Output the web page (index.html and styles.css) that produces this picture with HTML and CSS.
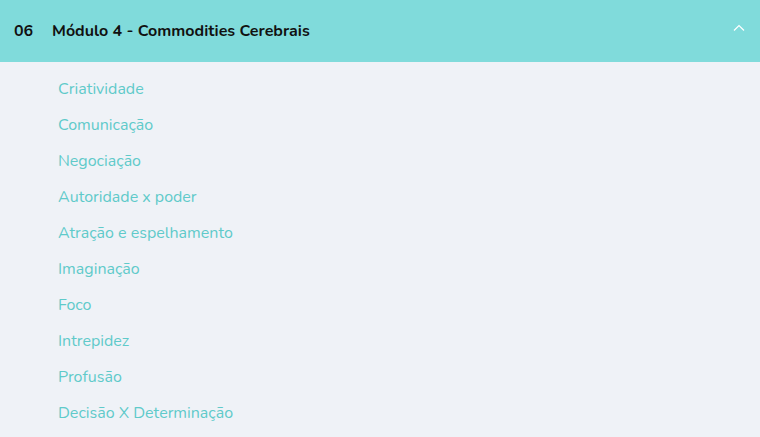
FILE: index.html
```html
<!DOCTYPE html>
<html>
<head>
<meta charset="utf-8">
<link rel="stylesheet" href="styles.css">
</head>
<body>
<div class="module">
  <div class="module-header">
    <span class="num">06</span>
    <span class="title">Módulo 4 - Commodities Cerebrais</span>
    <svg class="chevron" width="12" height="8" viewBox="0 0 12 8"><path d="M1 6.5 L6 1.5 L11 6.5" fill="none" stroke="#ffffff" stroke-width="1.2"/></svg>
  </div>
  <ul class="lessons">
    <li>Criatividade</li>
    <li>Comunicação</li>
    <li>Negociação</li>
    <li>Autoridade x poder</li>
    <li>Atração e espelhamento</li>
    <li>Imaginação</li>
    <li>Foco</li>
    <li>Intrepidez</li>
    <li>Profusão</li>
    <li>Decisão X Determinação</li>
  </ul>
</div>
</body>
</html>
```
FILE: styles.css
```css
html, body {
  margin: 0;
  padding: 0;
  background: #eff2f7;
  font-family: "Nunito", Lato, "Open Sans", sans-serif;
}
.module-header {
  height: 62px;
  background: #80dbdb;
  display: flex;
  align-items: center;
  padding: 0 15px 0 14px;
  box-sizing: border-box;
  color: #111;
  font-weight: 700;
  font-size: 16px;
}
.num {
  width: 38px;
}
.title {
  flex: 1;
}
.chevron {
  margin-top: -6px;
}
.lessons {
  list-style: none;
  margin: 0;
  padding: 9px 0 0 58px;
}
.lessons li {
  height: 36px;
  line-height: 36px;
  font-size: 16px;
  color: #5fcaca;
}
```
